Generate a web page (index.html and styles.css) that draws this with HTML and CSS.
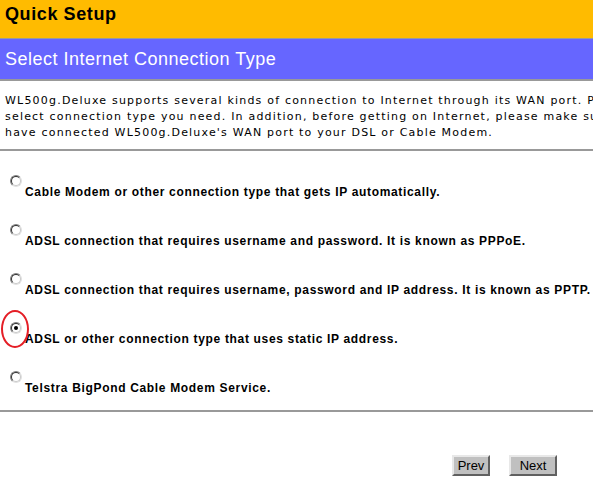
FILE: index.html
```html
<!DOCTYPE html>
<html>
<head>
<meta charset="utf-8">
<link rel="stylesheet" href="styles.css">
</head>
<body>
<div class="page">
  <div class="title">Quick Setup</div>
  <div class="subtitle">Select Internet Connection Type</div>
  <div class="intro">WL500g.Deluxe supports several kinds of connection to Internet through its WAN port. Please<br>select connection type you need. In addition, before getting on Internet, please make sure you<br>have connected WL500g.Deluxe's WAN port to your DSL or Cable Modem.</div>
  <div class="options">
    <div class="option"><span class="radio"></span><span class="label">Cable Modem or other connection type that gets IP automatically.</span></div>
    <div class="option"><span class="radio"></span><span class="label">ADSL connection that requires username and password. It is known as PPPoE.</span></div>
    <div class="option"><span class="radio"></span><span class="label">ADSL connection that requires username, password and IP address. It is known as PPTP.</span></div>
    <div class="option"><span class="radio checked"></span><span class="label">ADSL or other connection type that uses static IP address.</span><span class="mark"></span></div>
    <div class="option"><span class="radio"></span><span class="label">Telstra BigPond Cable Modem Service.</span></div>
  </div>
  <div class="actions">
    <button class="btn prev">Prev</button>
    <button class="btn next">Next</button>
  </div>
</div>
</body>
</html>
```
FILE: styles.css
```css
html, body {
  margin: 0;
  padding: 0;
  background: #ffffff;
}
.page {
  width: 593px;
  height: 483px;
  overflow: hidden;
  font-family: "Liberation Sans", Arial, sans-serif;
}
.title {
  background: #ffbb00;
  height: 38px;
  line-height: 28px;
  padding-left: 5px;
  font-size: 18px;
  font-weight: bold;
  letter-spacing: 0.6px;
  color: #000;
  border-bottom: 1px solid #9a9a9a;
}
.subtitle {
  background: #6666ff;
  height: 40px;
  line-height: 40px;
  padding-left: 5px;
  font-size: 18px;
  letter-spacing: 0.5px;
  color: #fff;
  border-bottom: 2px solid #999;
}
.intro {
  font-family: "DejaVu Sans", Verdana, sans-serif;
  font-size: 11px;
  letter-spacing: 1.2px;
  line-height: 16px;
  height: 48px;
  padding: 12px 0 8px 5px;
  white-space: nowrap;
  overflow: hidden;
  color: #000;
  border-bottom: 2px solid #999;
}
.options {
  display: flex;
  flex-direction: column;
  gap: 25px;
  padding-top: 24px;
  padding-bottom: 15px;
  border-bottom: 2px solid #999;
}
.option {
  position: relative;
  display: flex;
  flex-direction: column;
}
.radio {
  display: block;
  position: relative;
  box-sizing: border-box;
  margin-left: 10px;
  width: 12px;
  height: 12px;
  border-radius: 50%;
  border: 1px solid;
  border-color: #808080 #e0e0e0 #e0e0e0 #808080;
  background: #fff;
}
.radio::before {
  content: "";
  position: absolute;
  inset: 0;
  border-radius: 50%;
  border: 1px solid;
  border-color: #303030 #c8c8c8 #c8c8c8 #303030;
}
.radio.checked::after {
  content: "";
  position: absolute;
  left: 3px;
  top: 3px;
  width: 4px;
  height: 4px;
  border-radius: 50%;
  background: #000;
}
.label {
  display: block;
  margin-top: -2px;
  padding-left: 25px;
  font-size: 12px;
  font-weight: bold;
  letter-spacing: 0.67px;
  line-height: 14px;
  color: #000;
  white-space: nowrap;
}
.mark {
  position: absolute;
  left: 1px;
  top: -12px;
  width: 28px;
  height: 38px;
  box-sizing: border-box;
  border: 2px solid #e41e26;
  border-radius: 50%;
}
.actions {
  display: flex;
  justify-content: flex-end;
  gap: 19px;
  padding: 43px 36px 0 0;
}
.btn {
  box-sizing: border-box;
  font-family: "Liberation Sans", Arial, sans-serif;
  font-size: 13px;
  background: #c0c0c0;
  color: #000;
  height: 21px;
  padding: 0;
  border: 2px solid;
  border-color: #e8e8e8 #606060 #606060 #e8e8e8;
  border-radius: 0;
}
.btn.prev { width: 38px; }
.btn.next { width: 48px; }
```
